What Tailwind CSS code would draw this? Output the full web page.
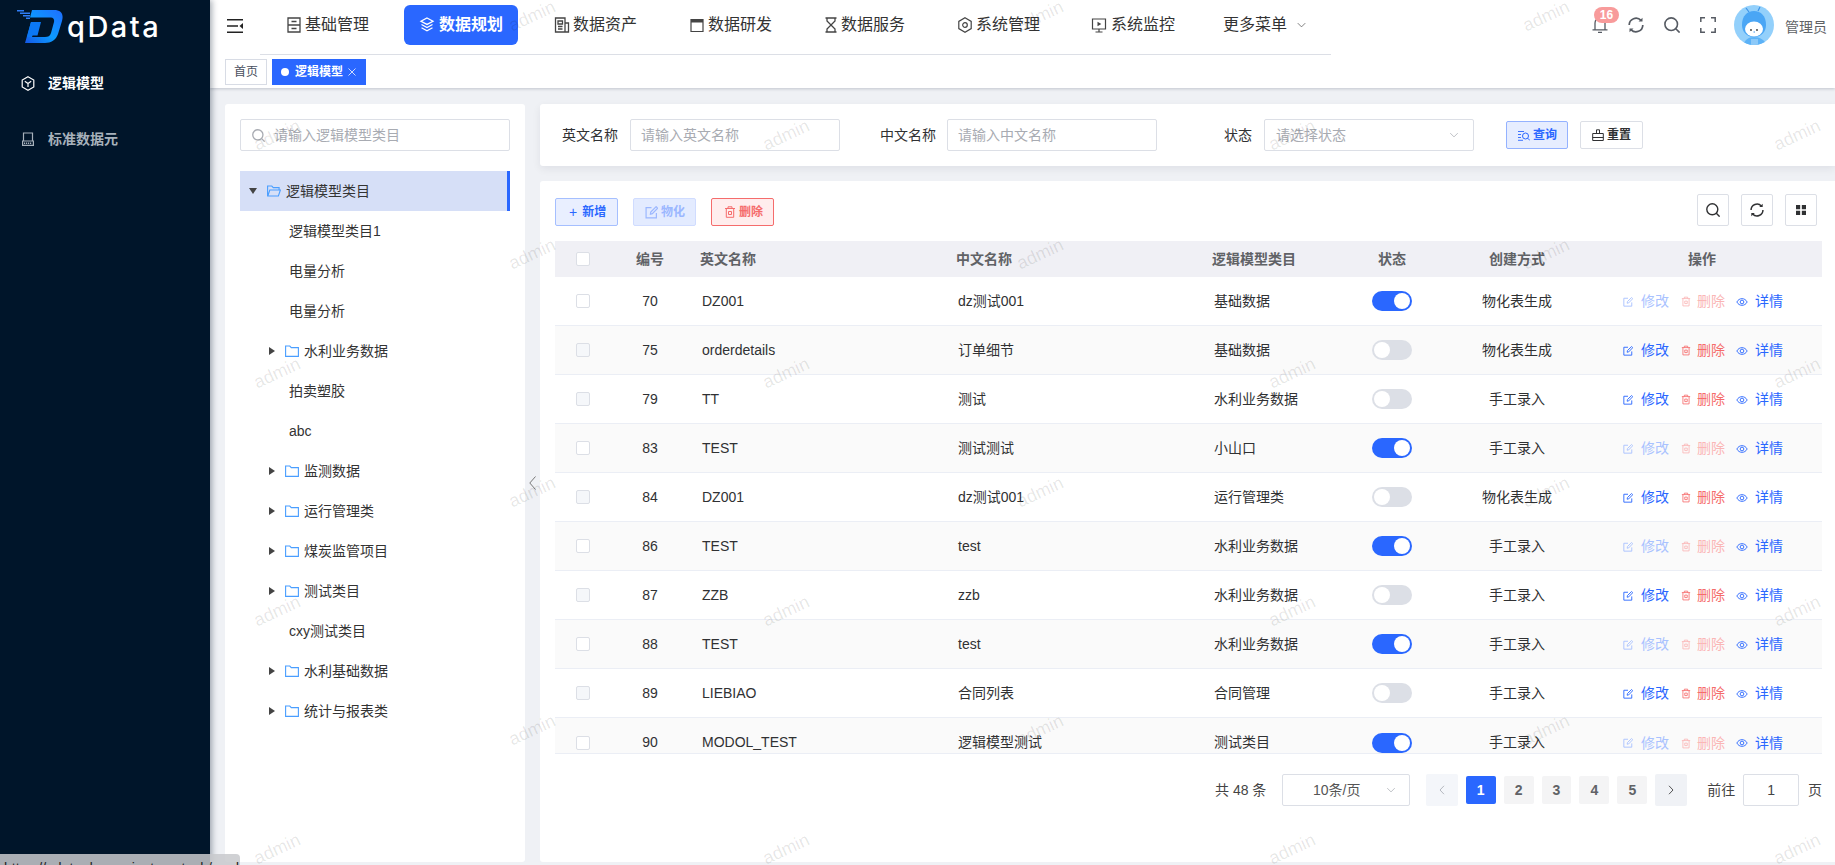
<!DOCTYPE html>
<html lang="zh-CN">
<head>
<meta charset="utf-8">
<title>qData</title>
<script src="https://cdn.jsdelivr.net/npm/@tailwindcss/browser@4"></script>
</head>
<body class="w-[1835px] h-[865px] relative overflow-hidden flex bg-[#eff1f5] text-[14px] text-[#303133] font-['Liberation_Sans','Noto_Sans_CJK_SC',sans-serif]">
<svg class="hidden" xmlns="http://www.w3.org/2000/svg">
  <symbol id="i-edit" viewBox="0 0 12 12"><path d="M10.5 6.5V11H1V1.5h5M5 7.500l.3-2L10.300.600l1.400 1.400L6.800 7.100z" fill="none" stroke="currentColor" stroke-width="1.100"/></symbol>
  <symbol id="i-trash" viewBox="0 0 12 12"><path d="M1 2.500h10M4 2.500V.8h4v1.700M2.300 2.500V11.300h7.400V2.500M4.500 5.500h3v3h-3z" fill="none" stroke="currentColor" stroke-width="1"/></symbol>
  <symbol id="i-eye" viewBox="0 0 14 12"><path d="M.8 6C2.300 3.300 4.500 2 7 2s4.700 1.300 6.200 4C11.700 8.700 9.500 10 7 10S2.300 8.700.8 6z" fill="none" stroke="currentColor" stroke-width="1.100"/><circle cx="7" cy="6" r="2.200" fill="none" stroke="currentColor" stroke-width="1.100"/></symbol>
  <symbol id="i-folder" viewBox="0 0 14 12"><path d="M.6 1h4.200l1.500 1.600h7.100v8.800H.6z" fill="none" stroke="#4a9eff" stroke-width="1.100"/></symbol>
  <symbol id="i-refresh" viewBox="0 0 16 16"><path d="M1.200 8a6.800 6.800 0 0 1 11.800-4.600M14.800 8a6.800 6.800 0 0 1-11.800 4.600" fill="none" stroke="currentColor" stroke-width="1.700"/><path d="M10.500 4.600h4V.8zM5.500 11.400h-4v3.800z" fill="currentColor"/></symbol>
  <symbol id="i-search" viewBox="0 0 16 16"><circle cx="7.200" cy="7.200" r="6.300" fill="none" stroke="currentColor" stroke-width="1.600"/><path d="M11.800 11.800l3.800 3.800" stroke="currentColor" stroke-width="1.600"/></symbol>
  <symbol id="i-chev-d" viewBox="0 0 12 8"><path d="M1 1.500l5 5 5-5" fill="none" stroke="currentColor" stroke-width="1"/></symbol>
</svg>

<!-- sidebar -->
<aside class="w-[210px] shrink-0 h-full bg-[#00152a] shadow-[2px_0_6px_rgba(0,21,41,0.35)] z-20 relative">
  <div class="h-[55px] pl-[17px] pt-[10px] flex items-start">
    <svg class="w-[46px] h-[33px]" viewBox="0 0 46 33" xmlns="http://www.w3.org/2000/svg">
      <defs><linearGradient id="lg" x1="0" y1="1" x2="1" y2="0"><stop offset="0" stop-color="#1557e6"/><stop offset="0.45" stop-color="#0c9bff"/><stop offset="1" stop-color="#1f6dff"/></linearGradient></defs>
      <path d="M0 0.700h7M3 3.200h10M6 5.700h7M9 8.200h4" stroke="#2f7cf6" stroke-width="1.400"/>
      <path fill-rule="evenodd" fill="url(#lg)" d="M15 0H37C44 0 47 4 45 11L41 24C39 30 34 33 28 33H8L14 12H20L15 27H28C31 27 33 26 34 23L37 12C37.500 9.500 36.500 7.500 34 7.500H13z"/>
      <path fill="#0b78f5" d="M14 12H24L20.500 25.500H15L15 27H10z"/>
    </svg>
    <span class="ml-[4px] mt-[1px] text-[29px] leading-[32px] font-medium tracking-[2.500px] text-white font-['Inter',sans-serif]">qData</span>
  </div>
  <nav>
    <div class="h-[56px] flex items-center pl-[21px] text-white font-bold">
      <svg class="w-[14px] h-[15px]" viewBox="0 0 14 15"><path d="M7 .8l5.800 3.300v6.800L7 14.200 1.200 10.900V4.100zM3.800 5.300L7 7.500l3.200-2.200M7 7.500v3.500" fill="none" stroke="currentColor" stroke-width="1.200"/></svg>
      <span class="ml-[13px]">逻辑模型</span>
    </div>
    <div class="h-[56px] flex items-center pl-[22px] text-[#a7b1bb] font-bold">
      <svg class="w-[12px] h-[14px]" viewBox="0 0 12 14"><path d="M1.500 9V1h9v8M.6 9h10.800v4.400H.6z" fill="none" stroke="currentColor" stroke-width="1.200"/><path d="M2 11.200h8" stroke="currentColor" stroke-width="1.500" stroke-dasharray="1.200 .8"/></svg>
      <span class="ml-[14px]">标准数据元</span>
    </div>
  </nav>
</aside>

<main class="flex-1 min-w-0 flex flex-col">
  <!-- top header -->
  <header class="h-[55px] shrink-0 bg-white flex items-start relative z-10">
    <svg class="w-[16px] h-[14px] ml-[17px] mt-[19px] text-[#222]" viewBox="0 0 16 14"><path d="M0 .8h16M0 7h11M0 13.200h16" stroke="currentColor" stroke-width="1.500"/><path d="M16 4v6l-3.500-3z" fill="currentColor"/></svg>
    <div class="ml-[17px] w-[1071px] h-[55px] border-b border-[#dcdfe6] pl-[11px] flex gap-[20px] pt-[5px] text-[16px] text-[#333]">
      <a class="w-[114px] h-[40px] flex items-center pl-[16px] gap-[3px]">
        <svg class="w-[16px] h-[16px] text-[#444] -ml-[1px]" viewBox="0 0 16 16"><path d="M2 1h12v14H2zM2 8h12M5.500 4.500h5M5.500 11.500h5" fill="none" stroke="currentColor" stroke-width="1.300"/></svg><span>基础管理</span>
      </a>
      <a class="w-[114px] h-[40px] -ml-[1px] mr-[1px] flex items-center pl-[15px] gap-[4px] rounded-[6px] bg-[#2a67ff] text-white font-bold">
        <svg class="w-[16px] h-[16px]" viewBox="0 0 16 16"><path d="M8 1l6 3.200L8 7.400 2 4.200zM2.500 7.500L8 10.500l5.500-3M2.500 10.800L8 13.800l5.500-3" fill="none" stroke="currentColor" stroke-width="1.300"/></svg><span>数据规划</span>
      </a>
      <a class="w-[114px] h-[40px] flex items-center pl-[15px] gap-[3px]">
        <svg class="w-[16px] h-[16px] text-[#444]" viewBox="0 0 16 16"><path d="M1.500 1h9.500v14H1.500zM11 6h3.500v9H11M4 4h4.500v3H4zM4 9.500h4.500M4 12h4.500" fill="none" stroke="currentColor" stroke-width="1.300"/></svg><span>数据资产</span>
      </a>
      <a class="w-[114px] h-[40px] flex items-center pl-[16px] gap-[3px]">
        <svg class="w-[16px] h-[16px] text-[#444]" viewBox="0 0 16 16"><path d="M2 2.500h12V14.500H2z" fill="none" stroke="currentColor" stroke-width="1.200"/><path d="M2 2.500h12v3H2z" fill="currentColor"/></svg><span>数据研发</span>
      </a>
      <a class="w-[114px] h-[40px] flex items-center pl-[16px] gap-[2px]">
        <svg class="w-[16px] h-[16px] text-[#444]" viewBox="0 0 16 16"><path d="M2.500 1h11M2.500 15h11M4 1v3L12 12v3M12 1v3L4 12v3" fill="none" stroke="currentColor" stroke-width="1.300"/></svg><span>数据服务</span>
      </a>
      <a class="w-[114px] h-[40px] flex items-center pl-[16px] gap-[3px]">
        <svg class="w-[16px] h-[16px] text-[#444]" viewBox="0 0 16 16"><path d="M8 .8l6.200 3.600v7.200L8 15.200 1.800 11.600V4.400z" fill="none" stroke="currentColor" stroke-width="1.200"/><circle cx="8" cy="8" r="2.300" fill="none" stroke="currentColor" stroke-width="1.200"/></svg><span>系统管理</span>
      </a>
      <a class="w-[114px] h-[40px] flex items-center pl-[16px] gap-[4px]">
        <svg class="w-[16px] h-[16px] text-[#444]" viewBox="0 0 16 16"><path d="M1.500 2h13v10h-13zM8 12v3M4.500 15h7" fill="none" stroke="currentColor" stroke-width="1.200"/><path d="M6.500 4.800l3.800 2.200-3.800 2.200z" fill="currentColor"/></svg><span>系统监控</span>
      </a>
      <a class="h-[40px] flex items-center pl-[14px] gap-[10px]">
        <span>更多菜单</span><svg class="w-[9px] h-[6px] text-[#555]" viewBox="0 0 12 8"><use href="#i-chev-d"/></svg>
      </a>
    </div>
    <div class="ml-auto h-[50px] flex items-center pr-[8px] text-[#565b63]">
      <div class="relative w-[16px] h-[16px]">
        <svg class="w-[16px] h-[16px]" viewBox="0 0 16 16"><path d="M3 12.500V6a5 5 0 0 1 10 0v6.500M.5 12.800h15M6 15.300h4" fill="none" stroke="currentColor" stroke-width="1.300"/></svg>
        <span class="absolute left-[2px] top-[-10px] w-[25px] h-[16px] rounded-full bg-[#f89b9b] text-white text-[12px] leading-[16px] font-bold text-center">16</span>
      </div>
      <svg class="w-[16px] h-[16px] ml-[20px]"><use href="#i-refresh"/></svg>
      <svg class="w-[16px] h-[16px] ml-[20px]"><use href="#i-search"/></svg>
      <svg class="w-[16px] h-[16px] ml-[20px]" viewBox="0 0 16 16"><path d="M.8 5V.8H5M11 .8h4.200V5M15.200 11v4.200H11M5 15.200H.8V11" fill="none" stroke="currentColor" stroke-width="1.500"/></svg>
      <div class="w-[40px] h-[40px] ml-[18px] rounded-full overflow-hidden bg-[#93d0fb]">
        <svg class="w-[40px] h-[40px]" viewBox="0 0 40 40"><path d="M15 7l-3-4M24 6l2-4" stroke="#3c93e8" stroke-width="1.200"/><path d="M8 20c0-9 5-14 12-14s12 5 12 14c0 6-4 12-12 12S8 26 8 20z" fill="#4aa6f5"/><ellipse cx="20" cy="24" rx="9" ry="7.500" fill="#fff"/><circle cx="17" cy="25" r=".9" fill="#333"/><circle cx="23" cy="25" r=".9" fill="#333"/><path d="M19.500 27h1.500" stroke="#3c93e8"/><path d="M9 40c2-5 5-8 11-8s11 3 12 8z" fill="#5cb2f7"/><rect x="17" y="34" width="7" height="6" fill="#8cc9f8"/></svg>
      </div>
      <span class="ml-[11px] mt-[4px] text-[#606266]">管理员</span>
    </div>
  </header>

  <!-- tags -->
  <div class="h-[33px] shrink-0 bg-white shadow-[0_1px_3px_rgba(0,21,41,0.2)] pl-[15px] pt-[4px] flex gap-[5px] text-[12px] relative z-[5]">
    <span class="w-[42px] h-[26px] border border-[#d8dce5] flex items-center justify-center text-[#495060]">首页</span>
    <span class="w-[94px] h-[26px] bg-[#2a67ff] text-white flex items-center pl-[9px]">
      <i class="w-[8px] h-[8px] rounded-full bg-white"></i><b class="ml-[6px]">逻辑模型</b>
      <svg class="w-[8px] h-[8px] ml-[5px]" viewBox="0 0 8 8"><path d="M.5.5l7 7M7.500.5l-7 7" stroke="#dfe8ff" stroke-width=".9"/></svg>
    </span>
  </div>

  <!-- content -->
  <div class="flex-1 min-h-0 flex pl-[15px] pt-[16px] pb-[3px]">
    <!-- tree panel -->
    <section class="w-[300px] shrink-0 bg-white rounded-[3px] pt-[15px] px-[15px]">
      <div class="h-[32px] border border-[#dcdfe6] rounded-[2px] flex items-center pl-[11px] text-[#a8abb2]">
        <svg class="w-[13px] h-[13px]"><use href="#i-search"/></svg><span class="ml-[9px]">请输入逻辑模型类目</span>
      </div>
      <div class="mt-[20px] text-[14px] text-[#333]">
        <div class="h-[40px] bg-[#d6dff7] border-r-[3px] border-[#2a67ff] flex items-center pl-[9px]">
          <i class="w-0 h-0 border-x-[4px] border-x-transparent border-t-[6px] border-t-[#444]"></i>
          <svg class="w-[14px] h-[12px] ml-[10px]" viewBox="0 0 14 12"><path d="M.6 11V1h4.200l1.500 1.600h5.800V5M.8 11l2-6h10.600l-2 6z" fill="none" stroke="#4a9eff" stroke-width="1.100"/></svg>
          <span class="ml-[5px]">逻辑模型类目</span>
        </div>
        <div class="h-[40px] flex items-center pl-[49px]">逻辑模型类目1</div>
        <div class="h-[40px] flex items-center pl-[49px]">电量分析</div>
        <div class="h-[40px] flex items-center pl-[49px]">电量分析</div>
        <div class="h-[40px] flex items-center pl-[29px]"><i class="w-0 h-0 border-y-[4px] border-y-transparent border-l-[6px] border-l-[#444]"></i><svg class="w-[14px] h-[12px] ml-[10px]"><use href="#i-folder"/></svg><span class="ml-[5px]">水利业务数据</span></div>
        <div class="h-[40px] flex items-center pl-[49px]">拍卖塑胶</div>
        <div class="h-[40px] flex items-center pl-[49px]">abc</div>
        <div class="h-[40px] flex items-center pl-[29px]"><i class="w-0 h-0 border-y-[4px] border-y-transparent border-l-[6px] border-l-[#444]"></i><svg class="w-[14px] h-[12px] ml-[10px]"><use href="#i-folder"/></svg><span class="ml-[5px]">监测数据</span></div>
        <div class="h-[40px] flex items-center pl-[29px]"><i class="w-0 h-0 border-y-[4px] border-y-transparent border-l-[6px] border-l-[#444]"></i><svg class="w-[14px] h-[12px] ml-[10px]"><use href="#i-folder"/></svg><span class="ml-[5px]">运行管理类</span></div>
        <div class="h-[40px] flex items-center pl-[29px]"><i class="w-0 h-0 border-y-[4px] border-y-transparent border-l-[6px] border-l-[#444]"></i><svg class="w-[14px] h-[12px] ml-[10px]"><use href="#i-folder"/></svg><span class="ml-[5px]">煤炭监管项目</span></div>
        <div class="h-[40px] flex items-center pl-[29px]"><i class="w-0 h-0 border-y-[4px] border-y-transparent border-l-[6px] border-l-[#444]"></i><svg class="w-[14px] h-[12px] ml-[10px]"><use href="#i-folder"/></svg><span class="ml-[5px]">测试类目</span></div>
        <div class="h-[40px] flex items-center pl-[49px]">cxy测试类目</div>
        <div class="h-[40px] flex items-center pl-[29px]"><i class="w-0 h-0 border-y-[4px] border-y-transparent border-l-[6px] border-l-[#444]"></i><svg class="w-[14px] h-[12px] ml-[10px]"><use href="#i-folder"/></svg><span class="ml-[5px]">水利基础数据</span></div>
        <div class="h-[40px] flex items-center pl-[29px]"><i class="w-0 h-0 border-y-[4px] border-y-transparent border-l-[6px] border-l-[#444]"></i><svg class="w-[14px] h-[12px] ml-[10px]"><use href="#i-folder"/></svg><span class="ml-[5px]">统计与报表类</span></div>
      </div>
    </section>

    <!-- splitter -->
    <div class="w-[15px] shrink-0 flex items-center justify-center">
      <svg class="w-[7px] h-[14px] text-[#777]" viewBox="0 0 7 14"><path d="M6.500.5L.8 7l5.700 6.500" fill="none" stroke="currentColor" stroke-width="1"/></svg>
    </div>

    <!-- right column -->
    <div class="flex-1 min-w-0 flex flex-col">
      <section class="h-[62px] shrink-0 bg-white rounded-l-[3px] shadow-[0_3px_8px_rgba(0,21,41,0.07)] flex items-center pl-[22px]">
        <span class="w-[56px]">英文名称</span>
        <div class="ml-[12px] w-[210px] h-[32px] border border-[#dcdfe6] rounded-[2px] flex items-center pl-[10px] text-[#a8abb2]">请输入英文名称</div>
        <span class="ml-[40px] w-[56px]">中文名称</span>
        <div class="ml-[11px] w-[210px] h-[32px] border border-[#dcdfe6] rounded-[2px] flex items-center pl-[10px] text-[#a8abb2]">请输入中文名称</div>
        <span class="ml-[67px] w-[28px]">状态</span>
        <div class="ml-[12px] w-[210px] h-[32px] border border-[#dcdfe6] rounded-[2px] flex items-center pl-[11px] pr-[14px] justify-between text-[#a8abb2]">
          <span>请选择状态</span><svg class="w-[10px] h-[6px]" viewBox="0 0 12 8"><use href="#i-chev-d"/></svg>
        </div>
        <button class="ml-[32px] w-[62px] h-[28px] border border-[#94b2ff] bg-[#e6edff] rounded-[2px] flex items-center pl-[11px] gap-[3px] text-[12px] font-bold text-[#2a67ff]">
          <svg class="w-[12px] h-[11px]" viewBox="0 0 12 11"><path d="M0 1.500h6M0 4.500h3M0 7.500h3M0 10.300h5" stroke="currentColor" stroke-width=".9"/><circle cx="7.500" cy="6" r="3" fill="none" stroke="currentColor"/><path d="M9.700 8.200L12 10.500" stroke="currentColor"/></svg><span>查询</span>
        </button>
        <button class="ml-[12px] w-[63px] h-[28px] border border-[#dcdfe6] bg-white rounded-[2px] flex items-center pl-[11px] gap-[3px] text-[12px] font-bold text-[#303133]">
          <svg class="w-[12px] h-[12px]" viewBox="0 0 12 12"><path d="M4.500 4.500V.8h3v3.700M.7 4.500h10.600v7H.7zM.7 8.500h10.600" fill="none" stroke="currentColor"/></svg><span>重置</span>
        </button>
      </section>

      <section class="mt-[15px] flex-1 min-h-0 bg-white rounded-l-[3px] pt-[13px] pl-[15px] pr-[13px]">
        <div class="h-[32px] flex justify-between">
          <div class="flex gap-[15px] mt-[4px] text-[12px] font-bold">
            <button class="w-[63px] h-[28px] border border-[#a5bfff] bg-[#e9efff] rounded-[2px] text-[#2a67ff] flex items-center pl-[13px]"><span class="text-[14px] font-normal leading-none">+</span><span class="ml-[5px]">新增</span></button>
            <button class="w-[63px] h-[28px] border border-[#d0dcff] bg-[#e3ebff] rounded-[2px] text-[#9bb7ff] flex items-center pl-[11px]"><svg class="w-[13px] h-[13px]"><use href="#i-edit"/></svg><span class="ml-[3px]">物化</span></button>
            <button class="w-[63px] h-[28px] border border-[#f56c6c] bg-[#ffeded] rounded-[2px] text-[#f56c6c] flex items-center pl-[12px]"><svg class="w-[12px] h-[12px]"><use href="#i-trash"/></svg><span class="ml-[3px]">删除</span></button>
          </div>
          <div class="flex gap-[12px] mr-[5px] text-[#303133]">
            <span class="w-[32px] h-[32px] border border-[#dcdfe6] rounded-[2px] flex items-center justify-center"><svg class="w-[14px] h-[14px]"><use href="#i-search"/></svg></span>
            <span class="w-[32px] h-[32px] border border-[#dcdfe6] rounded-[2px] flex items-center justify-center"><svg class="w-[14px] h-[14px]"><use href="#i-refresh"/></svg></span>
            <span class="w-[32px] h-[32px] border border-[#dcdfe6] rounded-[2px] flex items-center justify-center"><svg class="w-[10px] h-[10px]" viewBox="0 0 12 12"><path d="M0 0h5v5H0zM7 0h5v5H7zM0 7h5v5H0zM7 7h5v5H7z" fill="currentColor"/></svg></span>
          </div>
        </div>

        <div class="mt-[15px] w-[1267px]">
          <div class="h-[36px] bg-[#f0f0f5] grid grid-cols-[56px_78px_257px_255px_131px_120px_130px_240px] items-center font-bold text-[#606266]">
            <span class="justify-self-center w-[14px] h-[14px] border border-[#dcdfe6] bg-white rounded-[2px]"></span>
            <span class="text-center">编号</span><span class="pl-[11px]">英文名称</span><span class="pl-[10px]">中文名称</span><span class="pl-[11px]">逻辑模型类目</span><span class="text-center">状态</span><span class="text-center">创建方式</span><span class="text-center">操作</span>
          </div>
          <div class="h-[477px] overflow-hidden border-b border-[#ebeef5]">
            <!-- row 70 -->
            <div class="h-[49px] border-b border-[#ebeef5] bg-white grid grid-cols-[56px_78px_257px_255px_131px_120px_130px_240px] items-center">
              <span class="justify-self-center w-[14px] h-[14px] border border-[#dcdfe6] bg-white rounded-[2px]"></span>
              <span class="text-center">70</span><span class="pl-[13px]">DZ001</span><span class="pl-[12px]">dz测试001</span><span class="pl-[13px]">基础数据</span>
              <span class="justify-self-center w-[40px] h-[20px] rounded-full bg-[#2a67ff] flex justify-end items-center pr-[2px]"><i class="w-[16px] h-[16px] rounded-full bg-white"></i></span>
              <span class="text-center">物化表生成</span>
              <div class="flex items-center pl-[41px] pt-[1px]"><span class="flex items-center text-[#a9c2ff]"><svg class="w-[10px] h-[10px]"><use href="#i-edit"/></svg><span class="ml-[8px]">修改</span></span><span class="flex items-center ml-[12px] text-[#fab6b6]"><svg class="w-[10px] h-[11px]"><use href="#i-trash"/></svg><span class="ml-[6px]">删除</span></span><span class="flex items-center ml-[11px] text-[#2a67ff]"><svg class="w-[12px] h-[10px]"><use href="#i-eye"/></svg><span class="ml-[7px]">详情</span></span></div>
            </div>
            <!-- row 75 -->
            <div class="h-[49px] border-b border-[#ebeef5] bg-[#fafafa] grid grid-cols-[56px_78px_257px_255px_131px_120px_130px_240px] items-center">
              <span class="justify-self-center w-[14px] h-[14px] border border-[#dcdfe6] bg-[#f5f7fa] rounded-[2px]"></span>
              <span class="text-center">75</span><span class="pl-[13px]">orderdetails</span><span class="pl-[12px]">订单细节</span><span class="pl-[13px]">基础数据</span>
              <span class="justify-self-center w-[40px] h-[20px] rounded-full bg-[#dcdfe6] flex items-center pl-[2px]"><i class="w-[16px] h-[16px] rounded-full bg-white"></i></span>
              <span class="text-center">物化表生成</span>
              <div class="flex items-center pl-[41px] pt-[1px]"><span class="flex items-center text-[#2a67ff]"><svg class="w-[10px] h-[10px]"><use href="#i-edit"/></svg><span class="ml-[8px]">修改</span></span><span class="flex items-center ml-[12px] text-[#f56c6c]"><svg class="w-[10px] h-[11px]"><use href="#i-trash"/></svg><span class="ml-[6px]">删除</span></span><span class="flex items-center ml-[11px] text-[#2a67ff]"><svg class="w-[12px] h-[10px]"><use href="#i-eye"/></svg><span class="ml-[7px]">详情</span></span></div>
            </div>
            <!-- row 79 -->
            <div class="h-[49px] border-b border-[#ebeef5] bg-white grid grid-cols-[56px_78px_257px_255px_131px_120px_130px_240px] items-center">
              <span class="justify-self-center w-[14px] h-[14px] border border-[#dcdfe6] bg-[#f5f7fa] rounded-[2px]"></span>
              <span class="text-center">79</span><span class="pl-[13px]">TT</span><span class="pl-[12px]">测试</span><span class="pl-[13px]">水利业务数据</span>
              <span class="justify-self-center w-[40px] h-[20px] rounded-full bg-[#dcdfe6] flex items-center pl-[2px]"><i class="w-[16px] h-[16px] rounded-full bg-white"></i></span>
              <span class="text-center">手工录入</span>
              <div class="flex items-center pl-[41px] pt-[1px]"><span class="flex items-center text-[#2a67ff]"><svg class="w-[10px] h-[10px]"><use href="#i-edit"/></svg><span class="ml-[8px]">修改</span></span><span class="flex items-center ml-[12px] text-[#f56c6c]"><svg class="w-[10px] h-[11px]"><use href="#i-trash"/></svg><span class="ml-[6px]">删除</span></span><span class="flex items-center ml-[11px] text-[#2a67ff]"><svg class="w-[12px] h-[10px]"><use href="#i-eye"/></svg><span class="ml-[7px]">详情</span></span></div>
            </div>
            <!-- row 83 -->
            <div class="h-[49px] border-b border-[#ebeef5] bg-[#fafafa] grid grid-cols-[56px_78px_257px_255px_131px_120px_130px_240px] items-center">
              <span class="justify-self-center w-[14px] h-[14px] border border-[#dcdfe6] bg-white rounded-[2px]"></span>
              <span class="text-center">83</span><span class="pl-[13px]">TEST</span><span class="pl-[12px]">测试测试</span><span class="pl-[13px]">小山口</span>
              <span class="justify-self-center w-[40px] h-[20px] rounded-full bg-[#2a67ff] flex justify-end items-center pr-[2px]"><i class="w-[16px] h-[16px] rounded-full bg-white"></i></span>
              <span class="text-center">手工录入</span>
              <div class="flex items-center pl-[41px] pt-[1px]"><span class="flex items-center text-[#a9c2ff]"><svg class="w-[10px] h-[10px]"><use href="#i-edit"/></svg><span class="ml-[8px]">修改</span></span><span class="flex items-center ml-[12px] text-[#fab6b6]"><svg class="w-[10px] h-[11px]"><use href="#i-trash"/></svg><span class="ml-[6px]">删除</span></span><span class="flex items-center ml-[11px] text-[#2a67ff]"><svg class="w-[12px] h-[10px]"><use href="#i-eye"/></svg><span class="ml-[7px]">详情</span></span></div>
            </div>
            <!-- row 84 -->
            <div class="h-[49px] border-b border-[#ebeef5] bg-white grid grid-cols-[56px_78px_257px_255px_131px_120px_130px_240px] items-center">
              <span class="justify-self-center w-[14px] h-[14px] border border-[#dcdfe6] bg-[#f5f7fa] rounded-[2px]"></span>
              <span class="text-center">84</span><span class="pl-[13px]">DZ001</span><span class="pl-[12px]">dz测试001</span><span class="pl-[13px]">运行管理类</span>
              <span class="justify-self-center w-[40px] h-[20px] rounded-full bg-[#dcdfe6] flex items-center pl-[2px]"><i class="w-[16px] h-[16px] rounded-full bg-white"></i></span>
              <span class="text-center">物化表生成</span>
              <div class="flex items-center pl-[41px] pt-[1px]"><span class="flex items-center text-[#2a67ff]"><svg class="w-[10px] h-[10px]"><use href="#i-edit"/></svg><span class="ml-[8px]">修改</span></span><span class="flex items-center ml-[12px] text-[#f56c6c]"><svg class="w-[10px] h-[11px]"><use href="#i-trash"/></svg><span class="ml-[6px]">删除</span></span><span class="flex items-center ml-[11px] text-[#2a67ff]"><svg class="w-[12px] h-[10px]"><use href="#i-eye"/></svg><span class="ml-[7px]">详情</span></span></div>
            </div>
            <!-- row 86 -->
            <div class="h-[49px] border-b border-[#ebeef5] bg-[#fafafa] grid grid-cols-[56px_78px_257px_255px_131px_120px_130px_240px] items-center">
              <span class="justify-self-center w-[14px] h-[14px] border border-[#dcdfe6] bg-white rounded-[2px]"></span>
              <span class="text-center">86</span><span class="pl-[13px]">TEST</span><span class="pl-[12px]">test</span><span class="pl-[13px]">水利业务数据</span>
              <span class="justify-self-center w-[40px] h-[20px] rounded-full bg-[#2a67ff] flex justify-end items-center pr-[2px]"><i class="w-[16px] h-[16px] rounded-full bg-white"></i></span>
              <span class="text-center">手工录入</span>
              <div class="flex items-center pl-[41px] pt-[1px]"><span class="flex items-center text-[#a9c2ff]"><svg class="w-[10px] h-[10px]"><use href="#i-edit"/></svg><span class="ml-[8px]">修改</span></span><span class="flex items-center ml-[12px] text-[#fab6b6]"><svg class="w-[10px] h-[11px]"><use href="#i-trash"/></svg><span class="ml-[6px]">删除</span></span><span class="flex items-center ml-[11px] text-[#2a67ff]"><svg class="w-[12px] h-[10px]"><use href="#i-eye"/></svg><span class="ml-[7px]">详情</span></span></div>
            </div>
            <!-- row 87 -->
            <div class="h-[49px] border-b border-[#ebeef5] bg-white grid grid-cols-[56px_78px_257px_255px_131px_120px_130px_240px] items-center">
              <span class="justify-self-center w-[14px] h-[14px] border border-[#dcdfe6] bg-[#f5f7fa] rounded-[2px]"></span>
              <span class="text-center">87</span><span class="pl-[13px]">ZZB</span><span class="pl-[12px]">zzb</span><span class="pl-[13px]">水利业务数据</span>
              <span class="justify-self-center w-[40px] h-[20px] rounded-full bg-[#dcdfe6] flex items-center pl-[2px]"><i class="w-[16px] h-[16px] rounded-full bg-white"></i></span>
              <span class="text-center">手工录入</span>
              <div class="flex items-center pl-[41px] pt-[1px]"><span class="flex items-center text-[#2a67ff]"><svg class="w-[10px] h-[10px]"><use href="#i-edit"/></svg><span class="ml-[8px]">修改</span></span><span class="flex items-center ml-[12px] text-[#f56c6c]"><svg class="w-[10px] h-[11px]"><use href="#i-trash"/></svg><span class="ml-[6px]">删除</span></span><span class="flex items-center ml-[11px] text-[#2a67ff]"><svg class="w-[12px] h-[10px]"><use href="#i-eye"/></svg><span class="ml-[7px]">详情</span></span></div>
            </div>
            <!-- row 88 -->
            <div class="h-[49px] border-b border-[#ebeef5] bg-[#fafafa] grid grid-cols-[56px_78px_257px_255px_131px_120px_130px_240px] items-center">
              <span class="justify-self-center w-[14px] h-[14px] border border-[#dcdfe6] bg-white rounded-[2px]"></span>
              <span class="text-center">88</span><span class="pl-[13px]">TEST</span><span class="pl-[12px]">test</span><span class="pl-[13px]">水利业务数据</span>
              <span class="justify-self-center w-[40px] h-[20px] rounded-full bg-[#2a67ff] flex justify-end items-center pr-[2px]"><i class="w-[16px] h-[16px] rounded-full bg-white"></i></span>
              <span class="text-center">手工录入</span>
              <div class="flex items-center pl-[41px] pt-[1px]"><span class="flex items-center text-[#a9c2ff]"><svg class="w-[10px] h-[10px]"><use href="#i-edit"/></svg><span class="ml-[8px]">修改</span></span><span class="flex items-center ml-[12px] text-[#fab6b6]"><svg class="w-[10px] h-[11px]"><use href="#i-trash"/></svg><span class="ml-[6px]">删除</span></span><span class="flex items-center ml-[11px] text-[#2a67ff]"><svg class="w-[12px] h-[10px]"><use href="#i-eye"/></svg><span class="ml-[7px]">详情</span></span></div>
            </div>
            <!-- row 89 -->
            <div class="h-[49px] border-b border-[#ebeef5] bg-white grid grid-cols-[56px_78px_257px_255px_131px_120px_130px_240px] items-center">
              <span class="justify-self-center w-[14px] h-[14px] border border-[#dcdfe6] bg-[#f5f7fa] rounded-[2px]"></span>
              <span class="text-center">89</span><span class="pl-[13px]">LIEBIAO</span><span class="pl-[12px]">合同列表</span><span class="pl-[13px]">合同管理</span>
              <span class="justify-self-center w-[40px] h-[20px] rounded-full bg-[#dcdfe6] flex items-center pl-[2px]"><i class="w-[16px] h-[16px] rounded-full bg-white"></i></span>
              <span class="text-center">手工录入</span>
              <div class="flex items-center pl-[41px] pt-[1px]"><span class="flex items-center text-[#2a67ff]"><svg class="w-[10px] h-[10px]"><use href="#i-edit"/></svg><span class="ml-[8px]">修改</span></span><span class="flex items-center ml-[12px] text-[#f56c6c]"><svg class="w-[10px] h-[11px]"><use href="#i-trash"/></svg><span class="ml-[6px]">删除</span></span><span class="flex items-center ml-[11px] text-[#2a67ff]"><svg class="w-[12px] h-[10px]"><use href="#i-eye"/></svg><span class="ml-[7px]">详情</span></span></div>
            </div>
            <!-- row 90 -->
            <div class="h-[49px] bg-[#fafafa] grid grid-cols-[56px_78px_257px_255px_131px_120px_130px_240px] items-center">
              <span class="justify-self-center w-[14px] h-[14px] border border-[#dcdfe6] bg-white rounded-[2px]"></span>
              <span class="text-center">90</span><span class="pl-[13px]">MODOL_TEST</span><span class="pl-[12px]">逻辑模型测试</span><span class="pl-[13px]">测试类目</span>
              <span class="justify-self-center w-[40px] h-[20px] rounded-full bg-[#2a67ff] flex justify-end items-center pr-[2px]"><i class="w-[16px] h-[16px] rounded-full bg-white"></i></span>
              <span class="text-center">手工录入</span>
              <div class="flex items-center pl-[41px] pt-[1px]"><span class="flex items-center text-[#a9c2ff]"><svg class="w-[10px] h-[10px]"><use href="#i-edit"/></svg><span class="ml-[8px]">修改</span></span><span class="flex items-center ml-[12px] text-[#fab6b6]"><svg class="w-[10px] h-[11px]"><use href="#i-trash"/></svg><span class="ml-[6px]">删除</span></span><span class="flex items-center ml-[11px] text-[#2a67ff]"><svg class="w-[12px] h-[10px]"><use href="#i-eye"/></svg><span class="ml-[7px]">详情</span></span></div>
            </div>
          </div>

          <!-- pagination -->
          <div class="mt-[20px] h-[32px] flex items-center pl-[660px] text-[#606266] whitespace-nowrap">
            <span class="w-[51px] shrink-0 text-[#444]">共 48 条</span>
            <div class="ml-[16px] w-[128px] h-[32px] border border-[#dcdfe6] rounded-[2px] flex items-center pl-[30px] pr-[13px] justify-between text-[#555]"><span>10条/页</span><svg class="w-[10px] h-[6px] text-[#a8abb2]" viewBox="0 0 12 8"><use href="#i-chev-d"/></svg></div>
            <span class="ml-[16px] w-[32px] h-[32px] bg-[#f4f6fa] rounded-[2px] flex items-center justify-center text-[#b5b8bf]"><svg class="w-[6px] h-[10px]" viewBox="0 0 6 10"><path d="M5 .8L1 5l4 4.200" fill="none" stroke="currentColor"/></svg></span>
            <span class="ml-[8px] w-[30px] h-[28px] rounded-[2px] bg-[#2a67ff] text-white font-bold flex items-center justify-center">1</span>
            <span class="ml-[8px] w-[30px] h-[28px] rounded-[2px] bg-[#f4f4f5] font-bold flex items-center justify-center">2</span>
            <span class="ml-[8px] w-[30px] h-[28px] rounded-[2px] bg-[#f4f4f5] font-bold flex items-center justify-center">3</span>
            <span class="ml-[8px] w-[30px] h-[28px] rounded-[2px] bg-[#f4f4f5] font-bold flex items-center justify-center">4</span>
            <span class="ml-[8px] w-[30px] h-[28px] rounded-[2px] bg-[#f4f4f5] font-bold flex items-center justify-center">5</span>
            <span class="ml-[8px] w-[32px] h-[32px] bg-[#f0f2f6] rounded-[2px] flex items-center justify-center text-[#555]"><svg class="w-[6px] h-[10px]" viewBox="0 0 6 10"><path d="M1 .8L5 5 1 9.200" fill="none" stroke="currentColor"/></svg></span>
            <span class="ml-[20px] shrink-0 text-[#444]">前往</span>
            <span class="ml-[8px] w-[56px] h-[32px] border border-[#dcdfe6] rounded-[2px] flex items-center justify-center text-[#444]">1</span>
            <span class="ml-[9px] shrink-0 text-[#444]">页</span>
          </div>
        </div>
      </section>
    </div>
  </div>
</main>

<!-- hover URL status bubble -->
<div class="absolute left-0 bottom-0 w-[240px] h-[11px] z-30 bg-[#c8c9cc]/85 rounded-tr-[4px] overflow-hidden pl-[4px] pt-[6px] text-[14px] leading-[16px] text-[#222] font-['Liberation_Sans',sans-serif] whitespace-nowrap">https://qdata.demo.qiantong.tech/model</div>

<!-- watermark -->
<div class="absolute inset-0 z-[15] pointer-events-none overflow-hidden text-[18px] leading-none text-black/10 font-['Liberation_Sans',sans-serif]">
  <span class="absolute left-[532px] top-[16px] -translate-x-1/2 -translate-y-1/2 rotate-[-25deg]">admin</span>
  <span class="absolute left-[1040px] top-[16px] -translate-x-1/2 -translate-y-1/2 rotate-[-25deg]">admin</span>
  <span class="absolute left-[1546px] top-[16px] -translate-x-1/2 -translate-y-1/2 rotate-[-25deg]">admin</span>
  <span class="absolute left-[277px] top-[135px] -translate-x-1/2 -translate-y-1/2 rotate-[-25deg]">admin</span>
  <span class="absolute left-[786px] top-[135px] -translate-x-1/2 -translate-y-1/2 rotate-[-25deg]">admin</span>
  <span class="absolute left-[1292px] top-[135px] -translate-x-1/2 -translate-y-1/2 rotate-[-25deg]">admin</span>
  <span class="absolute left-[1797px] top-[135px] -translate-x-1/2 -translate-y-1/2 rotate-[-25deg]">admin</span>
  <span class="absolute left-[532px] top-[254px] -translate-x-1/2 -translate-y-1/2 rotate-[-25deg]">admin</span>
  <span class="absolute left-[1040px] top-[254px] -translate-x-1/2 -translate-y-1/2 rotate-[-25deg]">admin</span>
  <span class="absolute left-[1546px] top-[254px] -translate-x-1/2 -translate-y-1/2 rotate-[-25deg]">admin</span>
  <span class="absolute left-[277px] top-[373px] -translate-x-1/2 -translate-y-1/2 rotate-[-25deg]">admin</span>
  <span class="absolute left-[786px] top-[373px] -translate-x-1/2 -translate-y-1/2 rotate-[-25deg]">admin</span>
  <span class="absolute left-[1292px] top-[373px] -translate-x-1/2 -translate-y-1/2 rotate-[-25deg]">admin</span>
  <span class="absolute left-[1797px] top-[373px] -translate-x-1/2 -translate-y-1/2 rotate-[-25deg]">admin</span>
  <span class="absolute left-[532px] top-[492px] -translate-x-1/2 -translate-y-1/2 rotate-[-25deg]">admin</span>
  <span class="absolute left-[1040px] top-[492px] -translate-x-1/2 -translate-y-1/2 rotate-[-25deg]">admin</span>
  <span class="absolute left-[1546px] top-[492px] -translate-x-1/2 -translate-y-1/2 rotate-[-25deg]">admin</span>
  <span class="absolute left-[277px] top-[611px] -translate-x-1/2 -translate-y-1/2 rotate-[-25deg]">admin</span>
  <span class="absolute left-[786px] top-[611px] -translate-x-1/2 -translate-y-1/2 rotate-[-25deg]">admin</span>
  <span class="absolute left-[1292px] top-[611px] -translate-x-1/2 -translate-y-1/2 rotate-[-25deg]">admin</span>
  <span class="absolute left-[1797px] top-[611px] -translate-x-1/2 -translate-y-1/2 rotate-[-25deg]">admin</span>
  <span class="absolute left-[532px] top-[730px] -translate-x-1/2 -translate-y-1/2 rotate-[-25deg]">admin</span>
  <span class="absolute left-[1040px] top-[730px] -translate-x-1/2 -translate-y-1/2 rotate-[-25deg]">admin</span>
  <span class="absolute left-[1546px] top-[730px] -translate-x-1/2 -translate-y-1/2 rotate-[-25deg]">admin</span>
  <span class="absolute left-[277px] top-[849px] -translate-x-1/2 -translate-y-1/2 rotate-[-25deg]">admin</span>
  <span class="absolute left-[786px] top-[849px] -translate-x-1/2 -translate-y-1/2 rotate-[-25deg]">admin</span>
  <span class="absolute left-[1292px] top-[849px] -translate-x-1/2 -translate-y-1/2 rotate-[-25deg]">admin</span>
  <span class="absolute left-[1797px] top-[849px] -translate-x-1/2 -translate-y-1/2 rotate-[-25deg]">admin</span>
</div>
</body>
</html>
